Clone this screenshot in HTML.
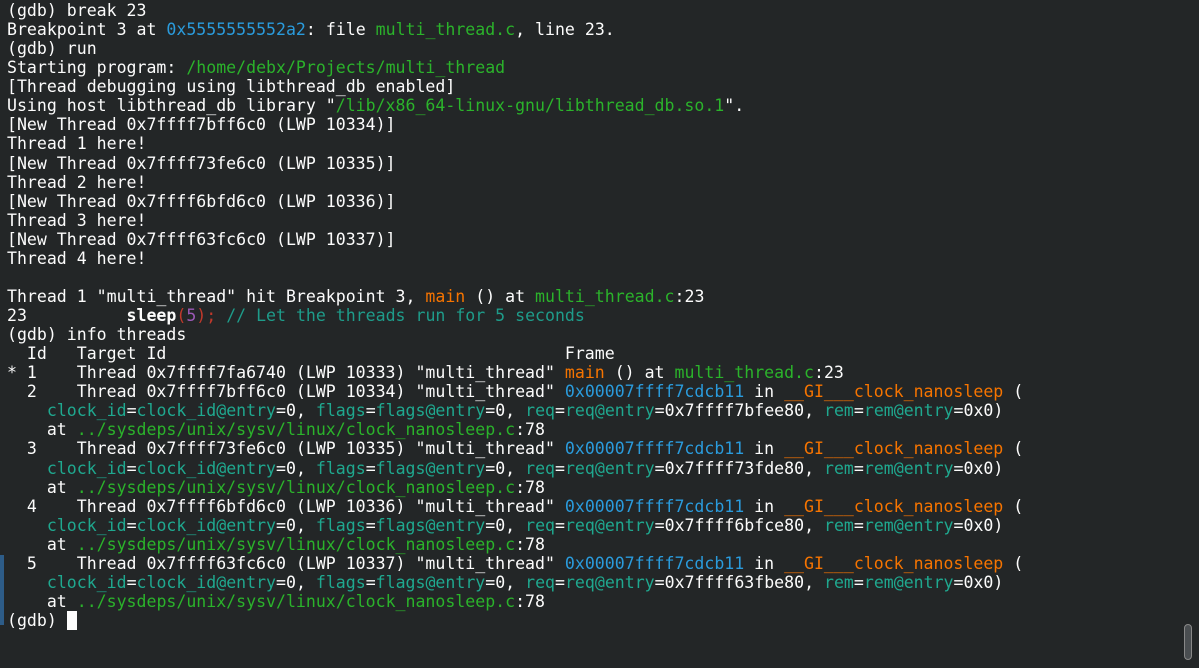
<!DOCTYPE html>
<html><head><meta charset="utf-8"><style>
html,body{margin:0;padding:0;background:#232627;width:1199px;height:668px;overflow:hidden}
pre{margin:0;position:absolute;left:7px;top:1px;font-family:"DejaVu Sans Mono","Liberation Mono",monospace;font-size:16.56px;line-height:19.06px;color:#fcfcfc}
.b{color:#2a9bdc}.g{color:#2bb32b}.t{color:#1fa88f}.o{color:#f67400}.r{color:#c0392b}.p{color:#9b59b6}.c{color:#1e9c8a}
.cur{background:#fcfcfc;color:#fcfcfc}
#bar{position:absolute;left:0;top:555px;width:4px;height:70px;background:#2d5c88}
#sb{position:absolute;left:1184px;top:624px;width:8px;height:36px;border:1px solid #888;border-radius:5px;background:#4a4e51;box-sizing:border-box}
</style></head><body>
<div id="bar"></div><div id="sb"></div>
<pre>(gdb) break 23
Breakpoint 3 at <span class="b">0x5555555552a2</span>: file <span class="g">multi_thread.c</span>, line 23.
(gdb) run
Starting program: <span class="g">/home/debx/Projects/multi_thread</span>
[Thread debugging using libthread_db enabled]
Using host libthread_db library "<span class="g">/lib/x86_64-linux-gnu/libthread_db.so.1</span>".
[New Thread 0x7ffff7bff6c0 (LWP 10334)]
Thread 1 here!
[New Thread 0x7ffff73fe6c0 (LWP 10335)]
Thread 2 here!
[New Thread 0x7ffff6bfd6c0 (LWP 10336)]
Thread 3 here!
[New Thread 0x7ffff63fc6c0 (LWP 10337)]
Thread 4 here!

Thread 1 "multi_thread" hit Breakpoint 3, <span class="o">main</span> () at <span class="g">multi_thread.c</span>:23
23          <b>sleep</b><span class="r">(</span><span class="p">5</span><span class="r">);</span> <span class="c">// Let the threads run for 5 seconds</span>
(gdb) info threads
  Id   Target Id                                        Frame 
* 1    Thread 0x7ffff7fa6740 (LWP 10333) "multi_thread" <span class="o">main</span> () at <span class="g">multi_thread.c</span>:23
  2    Thread 0x7ffff7bff6c0 (LWP 10334) "multi_thread" <span class="b">0x00007ffff7cdcb11</span> in <span class="o">__GI___clock_nanosleep</span> (
    <span class="t">clock_id</span>=<span class="t">clock_id@entry</span>=0, <span class="t">flags</span>=<span class="t">flags@entry</span>=0, <span class="t">req</span>=<span class="t">req@entry</span>=0x7ffff7bfee80, <span class="t">rem</span>=<span class="t">rem@entry</span>=0x0)
    at <span class="g">../sysdeps/unix/sysv/linux/clock_nanosleep.c</span>:78
  3    Thread 0x7ffff73fe6c0 (LWP 10335) "multi_thread" <span class="b">0x00007ffff7cdcb11</span> in <span class="o">__GI___clock_nanosleep</span> (
    <span class="t">clock_id</span>=<span class="t">clock_id@entry</span>=0, <span class="t">flags</span>=<span class="t">flags@entry</span>=0, <span class="t">req</span>=<span class="t">req@entry</span>=0x7ffff73fde80, <span class="t">rem</span>=<span class="t">rem@entry</span>=0x0)
    at <span class="g">../sysdeps/unix/sysv/linux/clock_nanosleep.c</span>:78
  4    Thread 0x7ffff6bfd6c0 (LWP 10336) "multi_thread" <span class="b">0x00007ffff7cdcb11</span> in <span class="o">__GI___clock_nanosleep</span> (
    <span class="t">clock_id</span>=<span class="t">clock_id@entry</span>=0, <span class="t">flags</span>=<span class="t">flags@entry</span>=0, <span class="t">req</span>=<span class="t">req@entry</span>=0x7ffff6bfce80, <span class="t">rem</span>=<span class="t">rem@entry</span>=0x0)
    at <span class="g">../sysdeps/unix/sysv/linux/clock_nanosleep.c</span>:78
  5    Thread 0x7ffff63fc6c0 (LWP 10337) "multi_thread" <span class="b">0x00007ffff7cdcb11</span> in <span class="o">__GI___clock_nanosleep</span> (
    <span class="t">clock_id</span>=<span class="t">clock_id@entry</span>=0, <span class="t">flags</span>=<span class="t">flags@entry</span>=0, <span class="t">req</span>=<span class="t">req@entry</span>=0x7ffff63fbe80, <span class="t">rem</span>=<span class="t">rem@entry</span>=0x0)
    at <span class="g">../sysdeps/unix/sysv/linux/clock_nanosleep.c</span>:78
(gdb) <span class="cur"> </span></pre>
</body></html>
